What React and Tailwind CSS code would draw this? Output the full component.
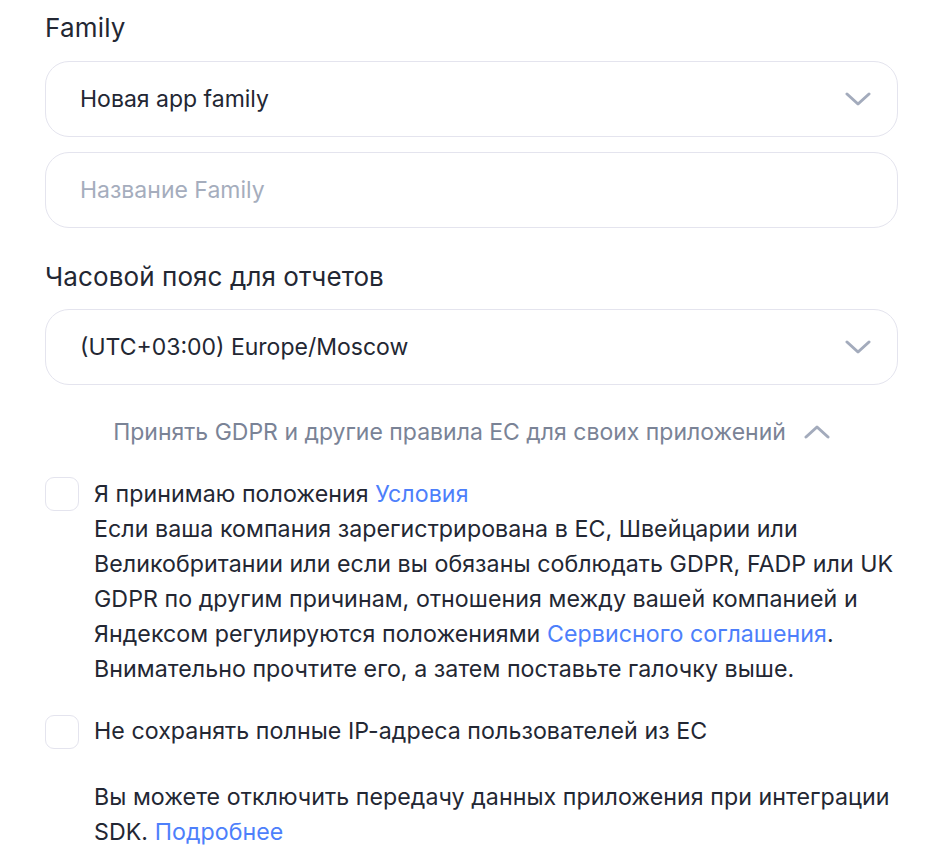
import { useState } from "react";

const font = { fontFamily: "Inter, 'Noto Sans', sans-serif" };

const Chevron = ({ up = false }) => (
  <svg width="26" height="16" viewBox="0 0 26 16" fill="none" className="shrink-0">
    <path
      d={up ? "M2 13 L13 3 L24 13" : "M2 3 L13 13 L24 3"}
      stroke="#a3abbc"
      strokeWidth="3"
      strokeLinecap="round"
      strokeLinejoin="round"
    />
  </svg>
);

const Select = ({ value }) => (
  <div className="h-[76px] rounded-[24px] border border-[#e4e4ee] bg-white pl-[34px] pr-[26px] flex items-center justify-between">
    <span className="text-[23px] text-[#232733]">{value}</span>
    <Chevron />
  </div>
);

const Checkbox = ({ checked, onChange }) => (
  <button
    onClick={onChange}
    className="w-[34px] h-[34px] shrink-0 rounded-[9px] border border-[#e4e4ee] bg-white"
  />
);

export default function App() {
  const [terms, setTerms] = useState(false);
  const [ip, setIp] = useState(false);

  return (
    <div className="min-h-screen bg-white text-[#232733]" style={font}>
      <div className="ml-[45px] w-[853px] pt-[12px]">
        {/* Family */}
        <h3 className="text-[26px] leading-[32px] tracking-[0.2px]">Family</h3>
        <div className="mt-[17px]">
          <Select value="Новая app family" />
        </div>
        <div className="mt-[15px] h-[76px] rounded-[24px] border border-[#e4e4ee] bg-white pl-[34px] flex items-center">
          <span className="text-[23px] text-[#a5adbd]">Название Family</span>
        </div>

        {/* Timezone */}
        <h3 className="mt-[33px] text-[26px] leading-[32px] tracking-[0.1px]">Часовой пояс для отчетов</h3>
        <div className="mt-[16px]">
          <Select value="(UTC+03:00) Europe/Moscow" />
        </div>

        {/* GDPR toggle */}
        <div className="mt-[32px] flex items-center justify-center gap-[18px]">
          <span className="text-[23px] leading-[30px] text-[#7a8396]">
            Принять GDPR и другие правила ЕС для своих приложений
          </span>
          <Chevron up />
        </div>

        {/* Checkboxes */}
        <div className="mt-[30px] flex gap-[15px]">
          <Checkbox checked={terms} onChange={() => setTerms(!terms)} />
          <p className="text-[23.2px] leading-[35px] tracking-[0.05px] -mt-[0.5px] whitespace-nowrap">
            Я принимаю положения <a className="text-[#4d7ffb]">Условия</a>
            <br />
            Если ваша компания зарегистрирована в ЕС, Швейцарии или
            <br />
            Великобритании или если вы обязаны соблюдать GDPR, FADP или UK
            <br />
            GDPR по другим причинам, отношения между вашей компанией и
            <br />
            Яндексом регулируются положениями{" "}
            <a className="text-[#4d7ffb]">Сервисного соглашения</a>.
            <br />
            Внимательно прочтите его, а затем поставьте галочку выше.
          </p>
        </div>

        <div className="mt-[28px] flex gap-[15px]">
          <Checkbox checked={ip} onChange={() => setIp(!ip)} />
          <p className="text-[23.2px] leading-[35px] tracking-[0.05px] -mt-[1px]">
            Не сохранять полные IP-адреса пользователей из ЕС
          </p>
        </div>

        <p className="mt-[31px] ml-[49px] text-[23.2px] leading-[35px] tracking-[0.05px] whitespace-nowrap">
          Вы можете отключить передачу данных приложения при интеграции
          <br />
          SDK. <a className="text-[#4d7ffb]">Подробнее</a>
        </p>
      </div>
    </div>
  );
}
